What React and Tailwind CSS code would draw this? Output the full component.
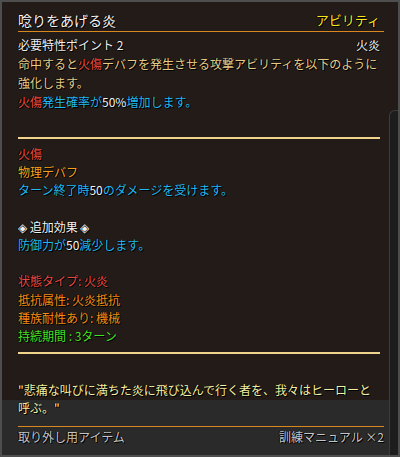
const font = { fontFamily: '"Noto Sans CJK JP", "Noto Sans", sans-serif' };

function W({ children }) {
  return <span className="text-[#f2f2f2]">{children}</span>;
}

export default function App() {
  return (
    <div
      style={font}
      className="relative w-[400px] h-[457px] overflow-hidden border-2 border-[#4e4e4e] bg-[linear-gradient(to_bottom,#221b18_398px,#2a2a2a_398px)] [text-shadow:1px_1px_0_#000,-1px_0_0_#000] text-[12px]"
    >
      {/* scrollbar column */}
      <div className="absolute right-0 top-[108px] bottom-0 w-[9px] rounded-tl-[6px] bg-[#1d1d1d] border-l border-t border-[#3c3c3c]" />

      <div className="pl-[16px] pr-[18px] pt-[8px]">
        {/* header */}
        <div className="flex items-end justify-between h-[20px]">
          <span className="text-[14px] leading-[20px] text-[#f4f4f4]">唸りをあげる炎</span>
          <span className="text-[13px] leading-[20px] text-[#f6e61a]">アビリティ</span>
        </div>
        <div className="mt-[1px] h-px mr-[-4px] bg-[#d9871f]" />

        <div className="mt-[3px] leading-[19px]">
          <div className="flex justify-between text-[#eeeeee]">
            <span>必要特性ポイント 2</span>
            <span>火炎</span>
          </div>
          <p className="text-[#e6ca86]">
            命中すると<span className="text-[#f0483a]">火傷</span>デバフを発生させる攻撃アビリティを以下のように強化します。
          </p>
          <p className="text-[#22b8f0]">
            <span className="text-[#f0483a]">火傷</span>発生確率が<W>50%</W>増加します。
          </p>
        </div>

        <div className="mt-[26px] h-[2px] bg-[#f0d48e]" />

        <div className="mt-[6px] leading-[18.2px]">
          <p className="text-[#ee4a3a]">火傷</p>
          <p className="text-[#f5a21a]">物理デバフ</p>
          <p className="text-[#22b8f0]">
            ターン終了時<W>50</W>のダメージを受けます。
          </p>
          <p>&nbsp;</p>
          <p className="text-[#f2f2f2]">◈ 追加効果 ◈</p>
          <p className="text-[#22b8f0]">
            防御力が<W>50</W>減少します。
          </p>
          <p>&nbsp;</p>
          <p className="text-[#e8463e]">状態タイプ: 火炎</p>
          <p className="text-[#f58a14]">抵抗属性: 火炎抵抗</p>
          <p className="text-[#f58a14]">種族耐性あり: 機械</p>
          <p className="text-[#44e022]">持続期間 : 3ターン</p>
        </div>

        <div className="mt-[7px] h-[2px] bg-[#f0d48e]" />

        <p className="mt-[27px] leading-[17.5px] text-[#f4f0a4]">
          "悲痛な叫びに満ちた炎に飛び込んで行く者を、我々はヒーローと呼ぶ。"
        </p>

        <div className="mt-[10px] h-px mr-[-4px] bg-[#d9871f]" />
        <div className="mt-[1px] flex justify-between leading-[18px] text-[#c4c4c4] mr-[-4px]">
          <span>取り外し用アイテム</span>
          <span>訓練マニュアル ×2</span>
        </div>
      </div>
    </div>
  );
}
